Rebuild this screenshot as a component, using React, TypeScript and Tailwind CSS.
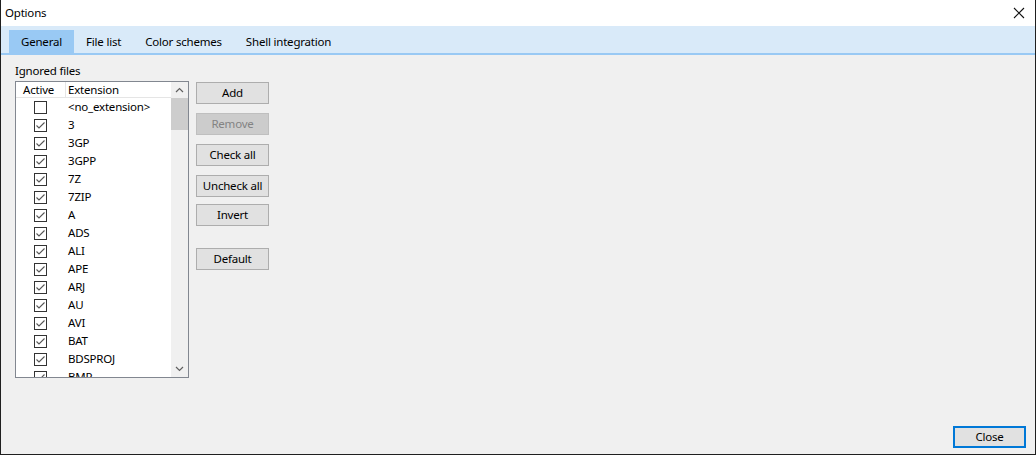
import React from 'react';

const extensions = [
    '3', '3GP', '3GPP', '7Z', '7ZIP', 'A', 'ADS', 'ALI', 'APE', 'ARJ', 'AU', 'AVI', 'BAT', 'BDSPROJ', 'BMP',
];

const Checkbox: React.FC<{ checked: boolean }> = ({ checked }) => (
    <div className="w-[13px] h-[13px] border border-[#333333] bg-white flex items-center justify-center shrink-0">
        {checked && (
            <svg width="11" height="11" viewBox="0 0 11 11">
                <path d="M1.5 5.5 L4 8 L9.5 2.5" fill="none" stroke="#555555" strokeWidth="1.1" />
            </svg>
        )}
    </div>
);

const Btn: React.FC<{ label: string; disabled?: boolean; className?: string }> = ({ label, disabled, className }) => (
    <div
        className={
            'w-[73px] h-[22px] flex items-center justify-center border ' +
            (disabled ? 'bg-[#cccccc] border-[#bfbfbf] text-[#838383] ' : 'bg-[#e1e1e1] border-[#adadad] text-black ') +
            (className ?? '')
        }
    >
        {label}
    </div>
);

const Row: React.FC<{ ext: string; checked: boolean }> = ({ ext, checked }) => (
    <div className="h-[18px] flex items-center shrink-0 pl-[18px]">
        <Checkbox checked={checked} />
        <div className="ml-[21px] whitespace-nowrap">{ext}</div>
    </div>
);

export default function App() {
    const tabs = ['General', 'File list', 'Color schemes', 'Shell integration'];
    return (
        <div
            className="w-[1036px] h-[455px] flex flex-col border-x border-b border-[#1f1f1f] text-[11.5px] tracking-[-0.2px] text-black overflow-hidden"
            style={{ fontFamily: '"Noto Sans", "Open Sans", sans-serif' }}
        >
            <div className="h-[26px] bg-white flex items-center justify-between pl-[4px] pr-[10px] shrink-0">
                <span>Options</span>
                <svg width="12" height="12" viewBox="0 0 12 12">
                    <path d="M1 1 L11 11 M11 1 L1 11" stroke="#111111" strokeWidth="1.1" />
                </svg>
            </div>
            <div className="h-[29px] bg-[#d9eaf9] border-b-2 border-[#99c9f4] flex items-end pl-[8px] shrink-0">
                {tabs.map((t, i) => (
                    <div
                        key={t}
                        className={'h-[23px] px-[12px] flex items-center ' + (i === 0 ? 'bg-[#99c9f4]' : '')}
                    >
                        {t}
                    </div>
                ))}
            </div>
            <div className="flex-1 bg-[#f0f0f0] flex flex-col justify-between pl-[14px] pt-[7px] pr-[9px] pb-[6px]">
                <div className="flex flex-col">
                    <div className="h-[18px] flex items-center">Ignored files</div>
                    <div className="flex mt-[1px]">
                        <div className="w-[174px] h-[297px] border border-[#828790] bg-white flex overflow-hidden">
                            <div className="flex-1 flex flex-col overflow-hidden">
                                <div className="h-[16px] flex items-center border-b border-[#e5e5e5] shrink-0">
                                    <div className="w-[50px] pl-[7px] border-r border-[#e5e5e5] h-full flex items-center">Active</div>
                                    <div className="pl-[2px]">Extension</div>
                                </div>
                                <Row ext="<no_extension>" checked={false} />
                                {extensions.map((e) => (
                                    <Row key={e} ext={e} checked={true} />
                                ))}
                            </div>
                            <div className="w-[17px] bg-[#f0f0f0] flex flex-col justify-between shrink-0">
                                <div className="flex flex-col">
                                    <div className="h-[16px] flex items-center justify-center">
                                        <svg width="9" height="6" viewBox="0 0 9 6">
                                            <path d="M1 5 L4.5 1.5 L8 5" fill="none" stroke="#606060" strokeWidth="1.2" />
                                        </svg>
                                    </div>
                                    <div className="h-[32px] bg-[#cdcdcd]" />
                                </div>
                                <div className="h-[16px] flex items-center justify-center">
                                    <svg width="9" height="6" viewBox="0 0 9 6">
                                        <path d="M1 1 L4.5 4.5 L8 1" fill="none" stroke="#606060" strokeWidth="1.2" />
                                    </svg>
                                </div>
                            </div>
                        </div>
                        <div className="flex flex-col ml-[7px] mt-[1px]">
                            <Btn label="Add" />
                            <Btn label="Remove" disabled className="mt-[9px]" />
                            <Btn label="Check all" className="mt-[9px]" />
                            <Btn label="Uncheck all" className="mt-[9px]" />
                            <Btn label="Invert" className="mt-[7px]" />
                            <Btn label="Default" className="mt-[22px]" />
                        </div>
                    </div>
                </div>
                <div className="flex justify-end">
                    <div className="w-[73px] h-[22px] flex items-center justify-center border-2 border-[#0078d7] bg-[#e1e1e1]">
                        Close
                    </div>
                </div>
            </div>
        </div>
    );
}
